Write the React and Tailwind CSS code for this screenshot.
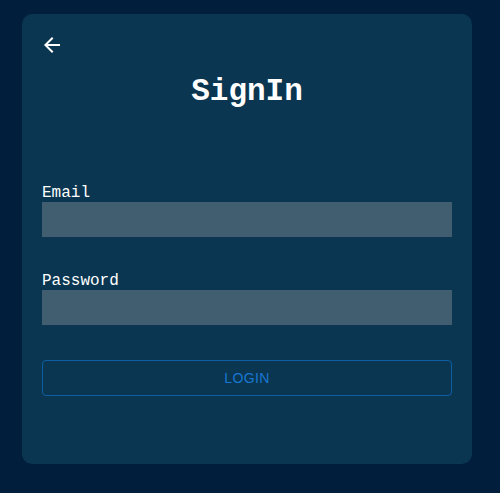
import React from 'react';

const SignIn = () => {
  return (
    <div className="min-h-[493px] bg-[#011e3c] pt-[14px] pl-[22px]">
      <div className="w-[450px] h-[450px] bg-[#0a3651] rounded-[10px] px-5 pt-[19px]">
        <button className="text-white block -ml-[2px]">
          <svg width="24" height="24" viewBox="0 0 24 24" fill="currentColor">
            <path d="M20 11H7.83l5.59-5.59L12 4l-8 8 8 8 1.41-1.41L7.83 13H20v-2z" />
          </svg>
        </button>
        <h2 className="text-center text-white font-bold text-[31px] leading-none mt-[19px] font-['Liberation_Mono',monospace]">SignIn</h2>

        <form className="mt-[77px]">
          <label className="block text-white text-[16px] leading-[18px] font-['Liberation_Mono',monospace]">Email</label>
          <input type="email" className="block w-full h-[35px] bg-[#415e71] outline-none text-white px-2" />

          <label className="block text-white text-[16px] leading-[18px] mt-[35px] font-['Liberation_Mono',monospace]">Password</label>
          <input type="password" className="block w-full h-[35px] bg-[#415e71] outline-none text-white px-2" />

          <button type="button" className="mt-[35px] w-full h-[36px] border border-[#0d5fa3] rounded text-[#1976d2] text-sm tracking-[0.4px] font-['Liberation_Sans',sans-serif]">
            LOGIN
          </button>
        </form>
      </div>
    </div>
  );
};

export default SignIn;
